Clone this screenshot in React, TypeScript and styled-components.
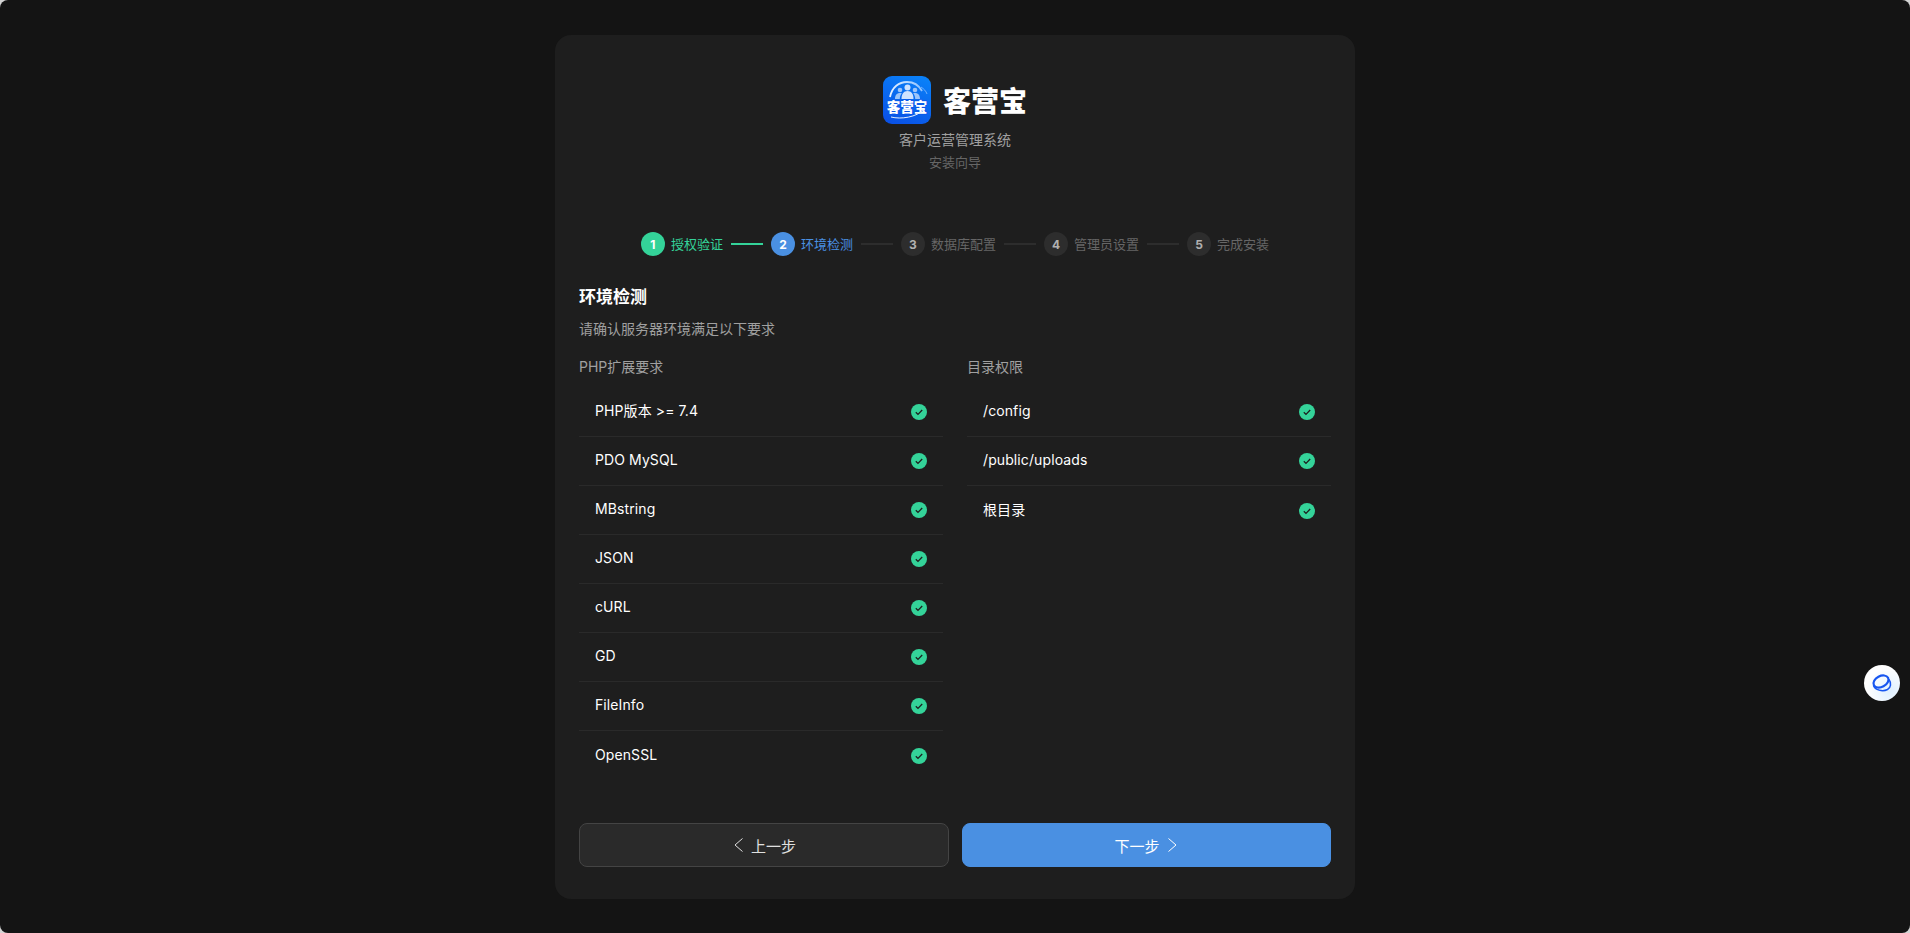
import { Fragment } from 'react';
import styled, { createGlobalStyle } from 'styled-components';

const FONT = `Inter, "Noto Sans CJK SC", sans-serif`;

const GlobalStyle = createGlobalStyle`
  html, body {
    margin: 0;
    padding: 0;
    height: 100%;
    background: #d4d4d4;
  }
  * {
    box-sizing: border-box;
  }
  #root {
    height: 100%;
  }
`;

const Page = styled.div`
  height: 933px;
  overflow: hidden;
  padding-top: 35px;
  background: #141414;
  border-radius: 8px;
  font-family: ${FONT};
  position: relative;
`;

const Card = styled.div`
  width: 800px;
  height: 864px;
  margin-left: 555px;
  padding: 41px 24px 32px;
  background: #1e1e1e;
  border-radius: 16px;
  display: flex;
  flex-direction: column;
`;

const Header = styled.div`
  display: flex;
  flex-direction: column;
  align-items: center;
`;

const Brand = styled.div`
  display: flex;
  align-items: center;
  gap: 12px;
  height: 48px;
`;

const BrandName = styled.div`
  margin-top: 4px;
  font-size: 28px;
  line-height: 48px;
  font-weight: 900;
  color: #fff;
`;

const Tagline = styled.div`
  margin-top: 6px;
  font-size: 14px;
  line-height: 20px;
  color: #a0a0a0;
`;

const Caption = styled.div`
  margin-top: 3px;
  font-size: 13px;
  line-height: 18px;
  color: #666;
`;

const Steps = styled.div`
  margin-top: 61px;
  display: flex;
  align-items: center;
  justify-content: center;
  height: 24px;
`;

const Step = styled.div`
  display: flex;
  align-items: center;
  gap: 6px;
`;

const StepDot = styled.div<{ $bg: string; $fg: string }>`
  width: 24px;
  height: 24px;
  border-radius: 50%;
  background: ${(p) => p.$bg};
  color: ${(p) => p.$fg};
  font-size: 12px;
  font-weight: 700;
  display: flex;
  align-items: center;
  justify-content: center;
`;

const StepLabel = styled.div<{ $color: string }>`
  font-size: 13px;
  line-height: 18px;
  color: ${(p) => p.$color};
`;

const StepLine = styled.div<{ $color: string }>`
  width: 32px;
  height: 2px;
  margin: 0 8px;
  background: ${(p) => p.$color};
`;

const SectionTitle = styled.h2`
  margin: 29px 0 0;
  font-size: 17px;
  line-height: 24px;
  font-weight: 700;
  color: #fff;
`;

const SectionDesc = styled.p`
  margin: 10px 0 0;
  font-size: 14px;
  line-height: 20px;
  color: #a0a0a0;
`;

const Columns = styled.div`
  margin-top: 18px;
  display: grid;
  grid-template-columns: 1fr 1fr;
  gap: 24px;
`;

const ColumnTitle = styled.div`
  font-size: 14px;
  line-height: 20px;
  color: #a0a0a0;
  margin-bottom: 11px;
`;

const CheckList = styled.div`
  border-radius: 8px;
  overflow: hidden;
`;

const CheckRow = styled.div`
  height: 49px;
  padding: 0 16px;
  display: flex;
  align-items: center;
  justify-content: space-between;
  border-bottom: 1px solid #2a2a2a;
  font-size: 14px;
  letter-spacing: 0.1px;
  color: #fff;

  &:last-child {
    border-bottom: none;
  }
`;

const CheckName = styled.span`
  line-height: 20px;
  margin-top: -2px;
`;

const Actions = styled.div`
  margin-top: auto;
  display: flex;
  gap: 13px;
`;

const ActionButton = styled.button<{ $primary?: boolean }>`
  flex: ${(p) => (p.$primary ? '0 0 369px' : '1')};
  height: 44px;
  border-radius: 8px;
  border: 1px solid ${(p) => (p.$primary ? '#4a90e2' : '#444')};
  background: ${(p) => (p.$primary ? '#4a90e2' : '#2a2a2a')};
  color: ${(p) => (p.$primary ? '#fff' : '#e0e0e0')};
  font-family: ${FONT};
  font-size: 15px;
  display: flex;
  align-items: center;
  justify-content: center;
  gap: 5px;
  padding: 0;
`;

const Widget = styled.div`
  position: absolute;
  left: 1864px;
  top: 665px;
  width: 36px;
  height: 36px;
  border-radius: 50%;
  background: radial-gradient(circle at 72% 72%, #dff0ff, #fff 65%);
  display: flex;
  align-items: center;
  justify-content: center;
`;

const LogoWord = styled.text`
  font-family: "Noto Sans CJK SC", sans-serif;
  font-size: 13.5px;
  font-weight: 900;
  paint-order: stroke;
`;

const Logo = () => (
  <svg width="48" height="48" viewBox="0 0 48 48">
    <defs>
      <linearGradient id="logoBg" x1="0.7" y1="0" x2="0.3" y2="1">
        <stop offset="0" stopColor="#0a80f8" />
        <stop offset="1" stopColor="#0a52e6" />
      </linearGradient>
      <linearGradient id="logoArc" x1="0" y1="0" x2="1" y2="0">
        <stop offset="0" stopColor="#e8f2ff" />
        <stop offset="1" stopColor="#8fc2ff" />
      </linearGradient>
    </defs>
    <rect width="48" height="48" rx="9" fill="url(#logoBg)" />
    <path d="M7 21C9 11 16 6 24 6c7 0 12 3.500 15 9" fill="none" stroke="url(#logoArc)" strokeWidth="1.800" />
    <path d="M38 11c3 2 5 4 6 7" fill="none" stroke="#9cc8ff" strokeWidth="0.7" />
    <circle cx="24.500" cy="11.500" r="3" fill="#cfe3ff" />
    <circle cx="17" cy="14" r="2.300" fill="#9cc5fa" />
    <circle cx="32" cy="14" r="2.300" fill="#9cc5fa" />
    <path d="M18.500 23c0-5 2-8 6-8s6 3 6 8z" fill="#cfe3ff" />
    <path d="M12 23c0-4 2-6 5-6 .8 0 1.300.1 1.800.4-1.300 1.300-2 3.300-2 5.600zM37 23c0-4-2-6-5-6-.8 0-1.300.1-1.800.4 1.300 1.300 2 3.300 2 5.600z" fill="#9cc5fa" />
    <LogoWord x="24" y="36" textAnchor="middle" fill="#fff" stroke="#0a55e8" strokeWidth="1.200">
      客营宝
    </LogoWord>
    <path d="M8 41c10 2.500 25 .5 34-8" fill="none" stroke="#e6f0ff" strokeWidth="1" />
  </svg>
);

const WidgetIcon = () => (
  <svg width="22" height="22" viewBox="0 0 22 22" fill="none" stroke="#1756f0" strokeWidth="2.200">
    <ellipse cx="10" cy="9.500" rx="8" ry="5.400" transform="rotate(-28 10 9.500)" />
    <path d="M2.500 13.500c1.500 4.500 9 6.500 14 4 3.500-2 4-6.500 1.500-10" strokeWidth="1.500" />
  </svg>
);

const CheckIcon = () => (
  <svg width="16" height="16" viewBox="0 0 16 16">
    <circle cx="8" cy="8" r="8" fill="#34d399" />
    <path d="M4.800 8.200l2.200 2.200 4.200-4.400" fill="none" stroke="#1e1e1e" strokeWidth="1.300" />
  </svg>
);

const Chevron = ({ d }: { d: string }) => (
  <svg width="14" height="14" viewBox="0 0 14 14" fill="none" stroke="currentColor" strokeWidth="1">
    <path d={d} />
  </svg>
);

const MUTED = { bg: '#2d2d2d', fg: '#b0b0b0', color: '#666' };

const STEPS = [
  { n: 1, label: '授权验证', bg: '#34d399', fg: '#fff', color: '#34d399' },
  { n: 2, label: '环境检测', bg: '#4a90e2', fg: '#fff', color: '#4a90e2' },
  { n: 3, label: '数据库配置', ...MUTED },
  { n: 4, label: '管理员设置', ...MUTED },
  { n: 5, label: '完成安装', ...MUTED },
];

const PHP_ITEMS = ['PHP版本 >= 7.4', 'PDO MySQL', 'MBstring', 'JSON', 'cURL', 'GD', 'FileInfo', 'OpenSSL'];
const DIR_ITEMS = ['/config', '/public/uploads', '根目录'];

const CheckColumn = ({ title, items }: { title: string; items: string[] }) => (
  <div>
    <ColumnTitle>{title}</ColumnTitle>
    <CheckList>
      {items.map((item) => (
        <CheckRow key={item}>
          <CheckName>{item}</CheckName>
          <CheckIcon />
        </CheckRow>
      ))}
    </CheckList>
  </div>
);

const App = () => {
  return (
    <Page>
      <GlobalStyle />
      <Card>
        <Header>
          <Brand>
            <Logo />
            <BrandName>客营宝</BrandName>
          </Brand>
          <Tagline>客户运营管理系统</Tagline>
          <Caption>安装向导</Caption>
        </Header>
        <Steps>
          {STEPS.map((s, i) => (
            <Fragment key={s.n}>
              <Step>
                <StepDot $bg={s.bg} $fg={s.fg}>{s.n}</StepDot>
                <StepLabel $color={s.color}>{s.label}</StepLabel>
              </Step>
              {i < STEPS.length - 1 && <StepLine $color={i === 0 ? '#34d399' : '#2d2d2d'} />}
            </Fragment>
          ))}
        </Steps>
        <SectionTitle>环境检测</SectionTitle>
        <SectionDesc>请确认服务器环境满足以下要求</SectionDesc>
        <Columns>
          <CheckColumn title="PHP扩展要求" items={PHP_ITEMS} />
          <CheckColumn title="目录权限" items={DIR_ITEMS} />
        </Columns>
        <Actions>
          <ActionButton>
            <Chevron d="M10.500 .5L3 7l7.500 6.500" />
            上一步
          </ActionButton>
          <ActionButton $primary>
            下一步
            <Chevron d="M3.500 .5L11 7l-7.500 6.500" />
          </ActionButton>
        </Actions>
      </Card>
      <Widget>
        <WidgetIcon />
      </Widget>
    </Page>
  );
};

export default App;
